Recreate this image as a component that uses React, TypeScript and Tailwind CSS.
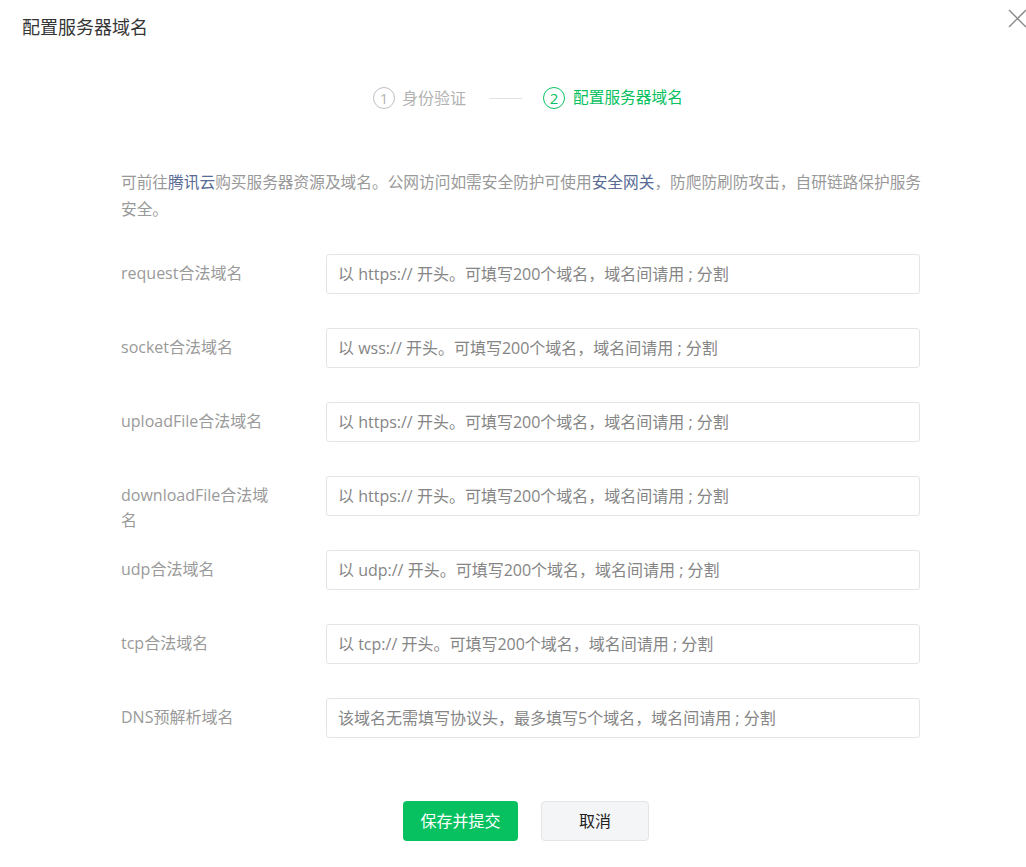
import { useState } from 'react'

const rows = [
  { label: 'request合法域名', placeholder: '以 https:// 开头。可填写200个域名，域名间请用 ; 分割' },
  { label: 'socket合法域名', placeholder: '以 wss:// 开头。可填写200个域名，域名间请用 ; 分割' },
  { label: 'uploadFile合法域名', placeholder: '以 https:// 开头。可填写200个域名，域名间请用 ; 分割' },
  { label: 'downloadFile合法域名', placeholder: '以 https:// 开头。可填写200个域名，域名间请用 ; 分割' },
  { label: 'udp合法域名', placeholder: '以 udp:// 开头。可填写200个域名，域名间请用 ; 分割' },
  { label: 'tcp合法域名', placeholder: '以 tcp:// 开头。可填写200个域名，域名间请用 ; 分割' },
  { label: 'DNS预解析域名', placeholder: '该域名无需填写协议头，最多填写5个域名，域名间请用 ; 分割' },
]

export default function App() {
  const [values, setValues] = useState<string[]>(rows.map(() => ''))

  return (
    <div
      className="relative w-[1026px] h-[867px] bg-white overflow-hidden"
      style={{ fontFamily: '"Open Sans", "Noto Sans CJK SC", sans-serif' }}
    >
      {/* Header */}
      <div className="pt-[15px] pl-[22px] text-[18px] leading-[24px] text-[#353535]">配置服务器域名</div>
      <button className="absolute left-[1008px] top-[9px] w-[19px] h-[19px] text-[#8a8a8a]">
        <svg viewBox="0 0 19 19" className="w-[19px] h-[19px]" fill="none" stroke="currentColor" strokeWidth="1.4">
          <path d="M1 1L18 18M18 1L1 18" />
        </svg>
      </button>

      {/* Steps */}
      <div className="mt-[48px] pl-[373px] flex items-center h-[22px]">
        <span className="w-[22px] h-[22px] rounded-full border border-[#bfbfbf] text-[#b5b5b5] text-[15px] flex items-center justify-center leading-none">1</span>
        <span className="ml-[7px] text-[16px] text-[#b2b2b2]">身份验证</span>
        <span className="ml-[23px] w-[33px] h-px bg-[#e2e2e2]" />
        <span className="ml-[21px] w-[22px] h-[22px] rounded-full border border-[#07c160] text-[#07c160] text-[15px] flex items-center justify-center leading-none">2</span>
        <span className="ml-[8px] text-[15.7px] text-[#07c160]">配置服务器域名</span>
      </div>

      {/* Content */}
      <div className="pl-[121px]">
        <p className="mt-[60px] w-[806px] text-[15.7px] leading-[27px] text-[#999999]">
          可前往<span className="text-[#576b95]">腾讯云</span>购买服务器资源及域名。公网访问如需安全防护可使用<span className="text-[#576b95]">安全网关</span>，防爬防刷防攻击，自研链路保护服务安全。
        </p>

        <div className="mt-[31px] flex flex-col gap-[34px]">
          {rows.map((r, i) => (
            <div key={r.label} className="flex h-10">
              <label className="w-[160px] pt-[7px] text-[16px] leading-[25px] text-[#9a9a9a] break-all">{r.label}</label>
              <input
                value={values[i]}
                onChange={e => {
                  const next = [...values]
                  next[i] = e.target.value
                  setValues(next)
                }}
                placeholder={r.placeholder}
                className="ml-[45px] w-[594px] h-10 px-[11px] border border-[#e4e4e4] rounded-[3px] text-[16px] text-[#353535] placeholder:text-[#858585] outline-none"
              />
            </div>
          ))}
        </div>
      </div>

      {/* Footer */}
      <div className="mt-[63px] pl-[403px] flex gap-[23px]">
        <button className="w-[115px] h-10 rounded-[4px] bg-[#07c160] text-white text-[16px]">保存并提交</button>
        <button className="w-[108px] h-10 rounded-[4px] bg-[#f4f5f7] border border-[#e3e4e6] text-[#222] text-[16px]">取消</button>
      </div>
    </div>
  )
}
